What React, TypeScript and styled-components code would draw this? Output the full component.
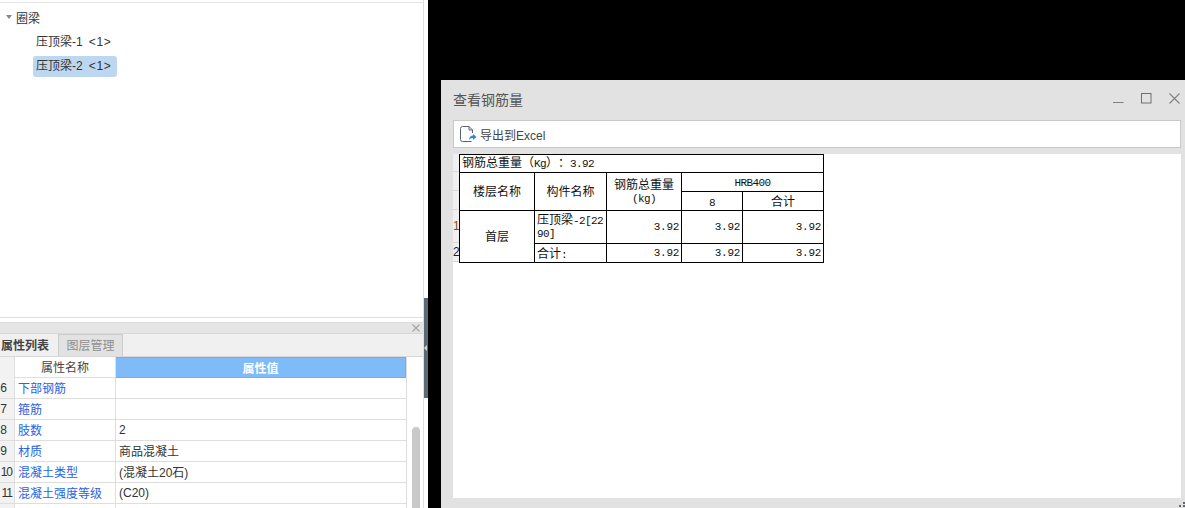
import React from "react";
import styled, { createGlobalStyle } from "styled-components";

const Global = createGlobalStyle`
  html, body { margin: 0; padding: 0; background: #000; overflow: hidden; }
  body { font-family: "Liberation Sans", "Noto Sans CJK SC", sans-serif; }
`;

const Page = styled.div`
  width: 1185px;
  height: 508px;
  display: flex;
  overflow: hidden;
  background: #000;
`;

const LeftPane = styled.div`
  width: 424px;
  height: 508px;
  flex: none;
  display: flex;
  flex-direction: column;
  background: #fff;
  border-right: 1px solid #dedede;
  box-sizing: border-box;
`;

const TopStrip = styled.div`
  height: 2px;
  flex: none;
  border-bottom: 1px solid #e4e4e4;
`;

const TreeArea = styled.div`
  height: 315px;
  flex: none;
  border-bottom: 1px solid #e0e0e0;
  padding: 4px 0 0 6px;
  box-sizing: border-box;
  font-size: 12px;
  color: #333;
`;

const TreeRoot = styled.div`
  height: 22px;
  padding-bottom: 2px;
  box-sizing: border-box;
  display: flex;
  align-items: center;
  gap: 4px;
`;

const Caret = styled.span`
  width: 0;
  height: 0;
  border-left: 3.5px solid transparent;
  border-right: 3.5px solid transparent;
  border-top: 4px solid #888;
`;

const TreeItem = styled.div<{ $selected?: boolean }>`
  width: 84px;
  height: 21px;
  margin: 3px 0 0 27px;
  padding-left: 3px;
  box-sizing: border-box;
  line-height: 21px;
  border-radius: 3px;
  background: ${(p) => (p.$selected ? "#bdd7f1" : "transparent")};
  white-space: pre;
`;

const Count = styled.span`
  margin-left: 6px;
  letter-spacing: 0.7px;
`;

const Gap = styled.div`
  height: 4px;
  flex: none;
`;

const PanelClose = styled.div`
  height: 10px;
  flex: none;
  background: #e5e5e5;
  border-top: 1px solid #ddd;
  border-bottom: 1px solid #d8d8d8;
  display: flex;
  justify-content: flex-end;
  align-items: center;
  padding-right: 3px;
`;

const TabBar = styled.div`
  height: 22px;
  flex: none;
  display: flex;
  background: #f0f0f0;
  border-bottom: 1px solid #d8d8d8;
  font-size: 12px;
`;

const Tab = styled.div<{ $active?: boolean }>`
  width: ${(p) => (p.$active ? "58px" : "65px")};
  display: flex;
  align-items: center;
  justify-content: ${(p) => (p.$active ? "flex-end" : "center")};
  padding: 0 ${(p) => (p.$active ? "9px" : "0")} 2px 0;
  box-sizing: border-box;
  font-weight: ${(p) => (p.$active ? 700 : 400)};
  color: ${(p) => (p.$active ? "#444" : "#8f8f8f")};
  background: ${(p) => (p.$active ? "#f0f0f0" : "#e2e2e2")};
  border: ${(p) => (p.$active ? "none" : "1px solid #ccc")};
  border-bottom: none;
`;

const GridWrap = styled.div`
  flex: 1;
  display: flex;
  min-height: 0;
`;

const Grid = styled.div`
  width: 407px;
  flex: none;
  overflow: hidden;
  font-size: 12px;
  border-right: 1px solid #ddd;
  box-sizing: border-box;
`;

const Row = styled.div`
  display: grid;
  grid-template-columns: 15px 101px 1fr;
  height: 21px;
  border-bottom: 1px solid #dedede;
  box-sizing: border-box;
`;

const HeadRow = styled(Row)`
  border-bottom: none;
`;

const Num = styled.div<{ $wide?: boolean }>`
  background: #f2f2f2;
  border-right: 1px solid #dedede;
  display: flex;
  align-items: center;
  justify-content: flex-end;
  padding: 0 ${(p) => (p.$wide ? "2px" : "7px")} 1px 0;
  letter-spacing: ${(p) => (p.$wide ? "-1px" : "0")};
  white-space: nowrap;
  color: #333;
`;

const NameCell = styled.div`
  border-right: 1px solid #dedede;
  color: #2a62e4;
  display: flex;
  align-items: center;
  padding: 0 0 1px 3px;
`;

const ValueCell = styled.div`
  color: #333;
  display: flex;
  align-items: center;
  padding: 0 0 1px 3px;
`;

const HeadName = styled.div`
  display: flex;
  align-items: center;
  justify-content: center;
  padding-bottom: 1px;
  color: #444;
  border-right: 1px solid #dedede;
  border-bottom: 1px solid #dedede;
`;

const HeadValue = styled.div`
  background: #7fbaf9;
  border: 1px solid #72aee9;
  border-left: none;
  color: #fff;
  font-weight: 700;
  display: flex;
  align-items: center;
  justify-content: center;
  padding-bottom: 1px;
`;

const ScrollTrack = styled.div`
  flex: 1;
  padding: 70px 3px 0 5px;
  box-sizing: border-box;
`;

const ScrollThumb = styled.div`
  height: 100%;
  background: #c9c9c9;
  border-radius: 4px 4px 0 0;
`;

const Gutter = styled.div`
  width: 4px;
  flex: none;
  background: #fff;
`;

const Splitter = styled.div`
  width: 4px;
  height: 100px;
  margin-top: 298px;
  background: #5d6a75;
  display: flex;
  align-items: center;
`;

const SplitArrow = styled.span`
  width: 0;
  height: 0;
  border-top: 3px solid transparent;
  border-bottom: 3px solid transparent;
  border-right: 3px solid #d5d5d5;
`;

const BlackGap = styled.div`
  width: 13px;
  flex: none;
  background: #000;
`;

const Dialog = styled.div`
  flex: 1;
  margin-top: 80px;
  height: 428px;
  background: #e2e2e2;
  display: flex;
  flex-direction: column;
  padding: 0 4px 10px 12px;
  box-sizing: border-box;
  position: relative;
`;

const TitleBar = styled.div`
  height: 40px;
  flex: none;
  display: flex;
  align-items: center;
  justify-content: space-between;
  padding-bottom: 2px;
  box-sizing: border-box;
  font-size: 14px;
  color: #555;
`;

const WinButtons = styled.div`
  display: flex;
  align-items: center;
  gap: 17px;
  margin-top: -2px;
  margin-right: 1px;
`;

const Toolbar = styled.div`
  height: 28px;
  flex: none;
  background: #fff;
  border: 1px solid #c8c8c8;
  box-sizing: border-box;
  display: flex;
  align-items: center;
  gap: 3px;
  padding-left: 6px;
  font-size: 12px;
  color: #444;
`;

const Sheet = styled.div`
  flex: 1;
  margin-top: 6px;
  background: #fff;
  display: flex;
  min-height: 0;
`;

const RowHeads = styled.div`
  width: 6px;
  flex: none;
  display: flex;
  flex-direction: column;
  font-size: 12px;
`;

const RowHead = styled.div<{ $h: number; $dark?: boolean }>`
  height: ${(p) => p.$h}px;
  background: #f0f0f0;
  border-bottom: 1px solid #d8d8d8;
  box-sizing: border-box;
  display: flex;
  align-items: center;
  color: ${(p) => (p.$dark ? "#222" : "#8a4b08")};
  overflow: hidden;
`;

const ReportTable = styled.table`
  border-collapse: collapse;
  table-layout: fixed;
  width: 364px;
  height: 108px;
  font-family: "Noto Sans CJK SC", monospace;
  font-size: 12px;
  color: #111;
  align-self: flex-start;
  text-spacing-trim: space-all;
  td {
    border: 1px solid #000;
    padding: 0 2px;
    overflow: hidden;
    line-height: 13px;
    white-space: nowrap;
  }
`;

const Label = styled.td<{ $lift?: number }>`
  text-align: center;
  && {
    padding-bottom: ${(p) => p.$lift ?? 2}px;
  }
`;

const TextCell = styled.td<{ $lift: number }>`
  && {
    padding-bottom: ${(p) => p.$lift}px;
  }
`;

const CellLine = styled.div`
  height: 13px;
  line-height: 13px;
`;

const Mono = styled.span`
  font-family: "Liberation Mono", monospace;
  font-size: 11px;
  letter-spacing: -0.6px;
`;

const Num2 = styled.td`
  text-align: right;
  font-family: "Liberation Mono", monospace;
  font-size: 11px;
  letter-spacing: -0.3px;
`;

const GripDots = styled.svg`
  position: absolute;
  right: 0;
  bottom: 0;
`;

const rows = [
  { n: 6, name: "下部钢筋", value: "" },
  { n: 7, name: "箍筋", value: "" },
  { n: 8, name: "肢数", value: "2" },
  { n: 9, name: "材质", value: "商品混凝土" },
  { n: 10, name: "混凝土类型", value: "(混凝土20石)" },
  { n: 11, name: "混凝土强度等级", value: "(C20)" },
  { n: 12, name: "", value: "" },
];

export default function App() {
  return (
    <Page>
      <Global />
      <LeftPane>
        <TopStrip />
        <TreeArea>
          <TreeRoot>
            <Caret />
            圈梁
          </TreeRoot>
          <TreeItem>
            压顶梁-1<Count>&lt;1&gt;</Count>
          </TreeItem>
          <TreeItem $selected>
            压顶梁-2<Count>&lt;1&gt;</Count>
          </TreeItem>
        </TreeArea>
        <Gap />
        <PanelClose>
          <svg width="8" height="8" viewBox="0 0 8 8">
            <path d="M.5.5l7 7M7.500.5l-7 7" stroke="#a5a5a5" strokeWidth="1.2" />
          </svg>
        </PanelClose>
        <TabBar>
          <Tab $active>属性列表</Tab>
          <Tab>图层管理</Tab>
        </TabBar>
        <GridWrap>
          <Grid>
            <HeadRow>
              <Num />
              <HeadName>属性名称</HeadName>
              <HeadValue>属性值</HeadValue>
            </HeadRow>
            {rows.map((r) => (
              <Row key={r.n}>
                <Num $wide={r.n > 9}>{r.n > 11 ? "" : r.n}</Num>
                <NameCell>{r.name}</NameCell>
                <ValueCell>{r.value}</ValueCell>
              </Row>
            ))}
          </Grid>
          <ScrollTrack>
            <ScrollThumb />
          </ScrollTrack>
        </GridWrap>
      </LeftPane>
      <Gutter>
        <Splitter>
          <SplitArrow />
        </Splitter>
      </Gutter>
      <BlackGap />
      <Dialog>
        <TitleBar>
          查看钢筋量
          <WinButtons>
            <svg width="11" height="11" viewBox="0 0 11 11">
              <path d="M0 9.500h10.500" stroke="#808080" strokeWidth="1" />
            </svg>
            <svg width="11" height="11" viewBox="0 0 11 11">
              <rect x="0.5" y="0.5" width="9.5" height="9.5" fill="none" stroke="#707070" strokeWidth="1" />
            </svg>
            <svg width="11" height="11" viewBox="0 0 11 11">
              <path d="M.5.5l10 10M10.500.5l-10 10" stroke="#808080" strokeWidth="1.1" />
            </svg>
          </WinButtons>
        </TitleBar>
        <Toolbar>
          <svg width="17" height="16" viewBox="0 0 17 16">
            <path d="M9 .5H2.500a2 2 0 0 0-2 2v11a2 2 0 0 0 2 2h9M9 .5l3.500 3.500v3M9 .5V4h3.500" fill="none" stroke="#5a6270" strokeWidth="1" />
            <path d="M9 14c0-3 2-4.500 4-4.500V8l3.500 3-3.500 3v-2c-1.500 0-3 .5-4 2z" fill="#2f86e0" />
          </svg>
          导出到Excel
        </Toolbar>
        <Sheet>
          <RowHeads>
            <RowHead $h={18} />
            <RowHead $h={19} />
            <RowHead $h={19} />
            <RowHead $h={33}>1</RowHead>
            <RowHead $h={19} $dark>2</RowHead>
          </RowHeads>
          <ReportTable>
            <colgroup>
              <col style={{ width: 75 }} />
              <col style={{ width: 72 }} />
              <col style={{ width: 75 }} />
              <col style={{ width: 61 }} />
              <col style={{ width: 81 }} />
            </colgroup>
            <tbody>
              <tr style={{ height: 18 }}>
                <TextCell colSpan={5} $lift={4}>
                  <CellLine>
                    钢筋总重量（<Mono>Kg</Mono>）：<Mono>3.92</Mono>
                  </CellLine>
                </TextCell>
              </tr>
              <tr style={{ height: 19 }}>
                <Label rowSpan={2}>楼层名称</Label>
                <Label rowSpan={2}>构件名称</Label>
                <Label rowSpan={2} $lift={4}>
                  <CellLine>钢筋总重量</CellLine>
                  <CellLine>
                    <Mono>(kg)</Mono>
                  </CellLine>
                </Label>
                <Label colSpan={2} $lift={4}>
                  <CellLine>
                    <Mono>HRB400</Mono>
                  </CellLine>
                </Label>
              </tr>
              <tr style={{ height: 19 }}>
                <Label>
                  <CellLine>
                    <Mono>8</Mono>
                  </CellLine>
                </Label>
                <Label>
                  <CellLine>合计</CellLine>
                </Label>
              </tr>
              <tr style={{ height: 33 }}>
                <Label rowSpan={2}>首层</Label>
                <TextCell $lift={5}>
                  <CellLine>
                    压顶梁<Mono>-2[22</Mono>
                  </CellLine>
                  <CellLine>
                    <Mono>90]</Mono>
                  </CellLine>
                </TextCell>
                <Num2>3.92</Num2>
                <Num2>3.92</Num2>
                <Num2>3.92</Num2>
              </tr>
              <tr style={{ height: 19 }}>
                <TextCell $lift={1}>
                  <CellLine>
                    合计<Mono>:</Mono>
                  </CellLine>
                </TextCell>
                <Num2>3.92</Num2>
                <Num2>3.92</Num2>
                <Num2>3.92</Num2>
              </tr>
            </tbody>
          </ReportTable>
        </Sheet>
        <GripDots width="6" height="6" viewBox="0 0 6 6">
          <path d="M4 0h2v2H4zM0 3h2v2H0zM4 3h2v2H4z" fill="#5d6a75" />
        </GripDots>
      </Dialog>
    </Page>
  );
}
